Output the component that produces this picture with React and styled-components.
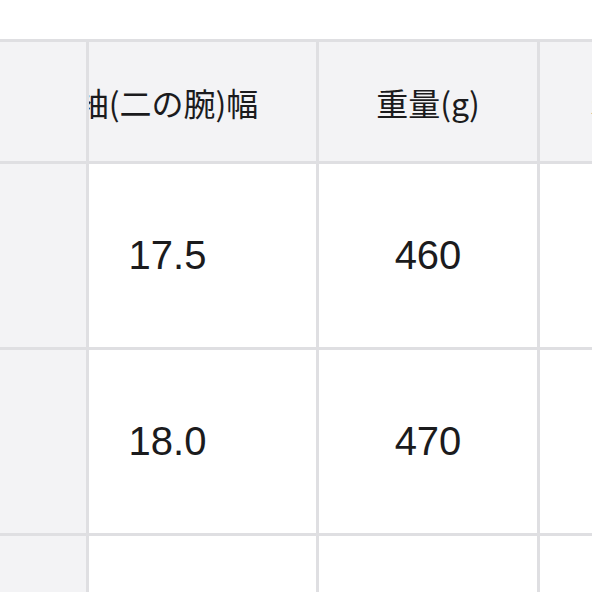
import React, { useLayoutEffect, useRef } from 'react';
import styled, { createGlobalStyle } from 'styled-components';

const GlobalStyle = createGlobalStyle`
  html, body {
    margin: 0;
    padding: 0;
    background: #ffffff;
  }
  body {
    font-family: "Liberation Sans", "Noto Sans CJK JP", sans-serif;
    color: #1b1b1d;
  }
`

const columns = [
  { key: 'size', label: 'サイズ', width: 89, sticky: true },
  { key: 'sleeve', label: '袖(二の腕)幅', width: 300 },
  { key: 'weight', label: '重量(g)', width: 221 },
  { key: 'length', label: '着丈', width: 168 }
];

const rows = [
  { size: 'M', sleeve: '17.5', weight: '460', length: '68' },
  { size: 'L', sleeve: '18.0', weight: '470', length: '70' },
  { size: 'XL', sleeve: '18.5', weight: '480', length: '72' }
];

const Page = styled.div`
  padding-top: 39px;
  width: 592px;
  height: 592px;
  box-sizing: border-box;
  overflow: hidden;
`
const Scroller = styled.div`
  width: 100%;
  overflow-x: auto;
  scrollbar-width: none;
  &::-webkit-scrollbar {
    display: none;
  }
`
const Table = styled.div`
  display: flex;
  flex-direction: column;
  width: max-content;
  border-top: 3px solid #dfdfe2;
`
const Row = styled.div`
  display: flex;
  width: max-content;
`
const Cell = styled.div`
  box-sizing: border-box;
  flex: none;
  width: ${p => p.$width}px;
  height: ${p => (p.$head ? 122 : 186)}px;
  display: flex;
  align-items: center;
  justify-content: center;
  border-right: 3px solid #dfdfe2;
  border-bottom: 3px solid #dfdfe2;
  background: ${p => (p.$head || p.$sticky ? '#f3f3f5' : '#ffffff')};
  font-family: ${p => (p.$head ? '"Noto Sans CJK JP", "Liberation Sans", sans-serif' : '"Liberation Sans", Arial, sans-serif')};
  font-size: ${p => (p.$head ? 32 : 40)}px;
  white-space: nowrap;
  ${p => p.$sticky && `
    position: sticky;
    left: 0;
    z-index: 1;
    color: transparent;
  `}
`

export default function App() {
  const scroller = useRef(null);

  useLayoutEffect(() => {
    if (scroller.current) scroller.current.scrollLeft = 70;
  }, []);

  return (
    <>
      <GlobalStyle />
      <Page>
        <Scroller ref={scroller}>
          <Table>
            <Row>
              {columns.map(col => (
                <Cell key={col.key} $head $sticky={col.sticky} $width={col.width}>
                  {col.label}
                </Cell>
              ))}
            </Row>
            {rows.map(row => (
              <Row key={row.size}>
                {columns.map(col => (
                  <Cell key={col.key} $sticky={col.sticky} $width={col.width}>
                    {row[col.key]}
                  </Cell>
                ))}
              </Row>
            ))}
          </Table>
        </Scroller>
      </Page>
    </>
  );
}
